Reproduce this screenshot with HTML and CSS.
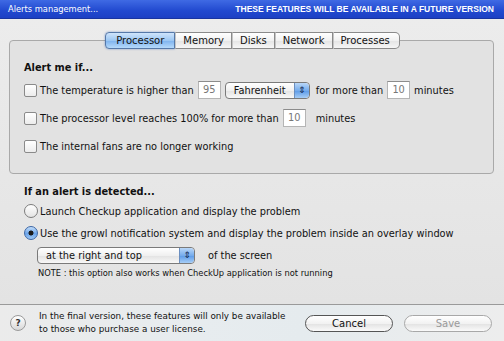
FILE: index.html
```html
<!DOCTYPE html>
<html lang="en">
<head>
  <meta charset="UTF-8">
  <title>Alerts management</title>
  <link rel="stylesheet" href="styles.css">
</head>
<body>

  <div class="window">
    <div class="titlebar">
      <span class="title">Alerts management...</span>
      <span class="notice">THESE FEATURES WILL BE AVAILABLE IN A FUTURE VERSION</span>
    </div>

    <div class="content">
      <div class="tabs">
        <div class="tab selected">Processor</div>
        <div class="tab">Memory</div>
        <div class="tab">Disks</div>
        <div class="tab">Network</div>
        <div class="tab last">Processes</div>
      </div>

      <div class="box">
        <div class="heading">Alert me if...</div>

        <div class="row">
          <span class="check"></span>
          <span>The temperature is higher than</span>
          <span class="field w-temp">95</span>
          <span class="popup w-unit">Fahrenheit<span class="arrows">&#8661;</span></span>
          <span class="gap">for more than</span>
          <span class="field w-min">10</span>
          <span>minutes</span>
        </div>

        <div class="row">
          <span class="check"></span>
          <span>The processor level reaches 100% for more than</span>
          <span class="field w-min">10</span>
          <span class="gap">minutes</span>
        </div>

        <div class="row">
          <span class="check"></span>
          <span>The internal fans are no longer working</span>
        </div>
      </div>

      <div class="section">
        <div class="heading">If an alert is detected...</div>

        <div class="radio-row">
          <span class="radio"></span>
          <span>Launch Checkup application and display the problem</span>
        </div>

        <div class="radio-row">
          <span class="radio on"></span>
          <span>Use the growl notification system and display the problem inside an overlay window</span>
        </div>

        <div class="select-row">
          <span class="popup w-pos">at the right and top<span class="arrows">&#8661;</span></span>
          <span class="gap-wide">of the screen</span>
        </div>

        <div class="note">NOTE : this option also works when CheckUp application is not running</div>
      </div>
    </div>

    <div class="footer">
      <span class="help">?</span>
      <div class="footer-text">
        In the final version, these features will only be available<br>
        to those who purchase a user license.
      </div>
      <button class="btn">Cancel</button>
      <button class="btn disabled">Save</button>
    </div>
  </div>

</body>
</html>
```

FILE: styles.css
```css
body {
  margin: 0;
  background: #e6e6e6;
  font-family: "DejaVu Sans", Verdana, sans-serif;
  font-size: 9.8px;
  color: #111;
}

.window {
  width: 504px;
  height: 341px;
  display: flex;
  flex-direction: column;
  overflow: hidden;
}

.titlebar {
  height: 18px;
  background: linear-gradient(#3f6ae4, #2149cf 60%, #1c40c4);
  color: #fff;
  display: flex;
  align-items: center;
  justify-content: space-between;
  padding: 0 10px 0 8px;
  border-bottom: 1px solid #1834a0;
}

.title {
  font-size: 8.3px;
}

.notice {
  font-family: "Liberation Sans", Arial, sans-serif;
  font-weight: bold;
  font-size: 8.5px;
}

.content {
  flex: 1;
  background: linear-gradient(#ececec, #e3e3e3);
  padding: 13px 10px 0 9px;
}

.tabs {
  display: flex;
  justify-content: center;
  height: 17px;
  position: relative;
  z-index: 1;
  padding-left: 2px;
}

.tab {
  height: 15px;
  line-height: 15px;
  padding: 0 7px;
  border: 1px solid #8a8a8a;
  border-left: 1px solid #c4c4c4;
  background: linear-gradient(#ffffff, #f1f1f1 50%, #e4e4e4 51%, #f6f6f6);
  font-size: 10px;
}

.tab.selected {
  border: 1px solid #5578a8;
  border-radius: 4px 0 0 4px;
  background: linear-gradient(#cfe4fb, #9cc7f3 50%, #7db2ee 51%, #b6dafb);
  box-shadow: 0 0 2px rgba(40, 90, 180, 0.6);
  padding: 0 10px;
}

.tab.last {
  border-radius: 0 5px 5px 0;
  padding-right: 9px;
}

.box {
  margin-top: -9px;
  border: 1px solid #a9a9a9;
  border-radius: 4px;
  background: #e2e2e2;
  padding: 20px 14px 13px 14px;
}

.heading {
  font-weight: bold;
  height: 14px;
  line-height: 14px;
  margin-bottom: 1px;
}

.row {
  height: 28px;
  display: flex;
  align-items: center;
  white-space: nowrap;
}

.check {
  width: 11px;
  height: 11px;
  border: 1px solid #8a8a8a;
  border-radius: 2px;
  background: linear-gradient(#ffffff, #ececec);
  margin-right: 3px;
}

.field {
  height: 16px;
  line-height: 16px;
  border: 1px solid #b5b5b5;
  border-top-color: #8c8c8c;
  background: #fff;
  color: #777;
  text-align: center;
  margin: 0 4px;
}

.w-temp { width: 21px; }
.w-min { width: 21px; }

.popup {
  height: 15px;
  line-height: 15px;
  border: 1px solid #7a7a7a;
  border-radius: 4px;
  background: linear-gradient(#ffffff, #f0f0f0 50%, #e2e2e2 51%, #f8f8f8);
  padding-left: 8px;
  display: flex;
  justify-content: space-between;
  box-sizing: content-box;
}

.w-unit { width: 75px; }
.w-pos { width: 148px; }

.arrows {
  width: 14px;
  text-align: center;
  border-radius: 0 4px 4px 0;
  background: linear-gradient(#b9d7f8, #76acec 50%, #5b9ae8 51%, #a6cdf6);
  border-left: 1px solid #6b8fc0;
  font-size: 9px;
  color: #10284e;
}

.gap { margin-left: 6px; }
.gap-wide { margin-left: 13px; }

.section {
  padding: 11px 0 0 15px;
}

.section .heading {
  margin-bottom: 1px;
}

.radio-row {
  height: 22px;
  display: flex;
  align-items: center;
  white-space: nowrap;
}

.radio {
  width: 12px;
  height: 12px;
  border: 1px solid #7d7d7d;
  border-radius: 50%;
  background: linear-gradient(#ffffff, #e4e4e4);
  margin-right: 2px;
}

.radio.on {
  border-color: #3d67a6;
  background: radial-gradient(circle, #1b1b1b 0 2.2px, transparent 2.8px),
              linear-gradient(#c4def9, #6ba4ea 55%, #9ec8f4);
}

.select-row {
  height: 22px;
  display: flex;
  align-items: center;
  padding-left: 13px;
}

.note {
  height: 14px;
  line-height: 14px;
  font-size: 8.3px;
  padding-left: 14px;
}

.footer {
  height: 36px;
  border-top: 1px solid #9a9a9a;
  background: linear-gradient(100deg, #ebebeb, #e7ecef 40%, #e5ebee 60%, #ededed);
  display: flex;
  align-items: center;
  padding: 0 12px 0 10px;
}

.help {
  width: 14px;
  height: 14px;
  border-radius: 50%;
  border: 1px solid #9a9a9a;
  background: linear-gradient(#ffffff, #d8d8d8);
  font-size: 9px;
  font-weight: bold;
  line-height: 14px;
  text-align: center;
  color: #333;
}

.footer-text {
  flex: 1;
  margin-left: 13px;
  font-size: 8.8px;
  line-height: 13px;
}

.btn {
  width: 88px;
  height: 17px;
  border: 1px solid #555;
  border-radius: 9px;
  background: linear-gradient(#ffffff, #f2f2f2 50%, #e2e2e2 51%, #fafafa);
  font-family: "DejaVu Sans", Verdana, sans-serif;
  font-size: 10px;
  padding: 0;
  color: #111;
  margin-left: 11px;
}

.btn.disabled {
  border-color: #a8a8a8;
  color: #9a9a9a;
}
```
